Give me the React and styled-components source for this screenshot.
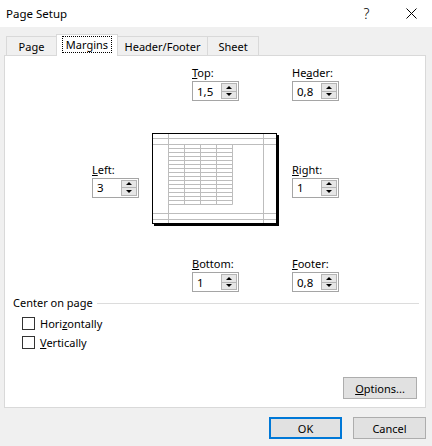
import React from "react";
import styled, { createGlobalStyle } from "styled-components";

const GlobalStyle = createGlobalStyle`
  html, body {
    margin: 0;
    padding: 0;
    background: #f0f0f0;
  }
  body {
    font-family: "Noto Sans", "Liberation Sans", sans-serif;
    font-size: 11px;
    color: #000;
  }
  * {
    box-sizing: border-box;
  }
`;

const App = () => {
  return (
    <>
      <GlobalStyle />
      <Window>
        <TitleBar>
          <Title>Page Setup</Title>
          <CaptionButtons>
            <HelpButton>?</HelpButton>
            <CloseButton>
              <svg width="11" height="11" viewBox="0 0 11 11">
                <path d="M0.5 0.5 L10.5 10.5 M10.5 0.5 L0.5 10.5" stroke="#000" strokeWidth="1" />
              </svg>
            </CloseButton>
          </CaptionButtons>
        </TitleBar>

        <TabRow>
          <Tab $w={51}>Page</Tab>
          <Tab $w={62} $active>
            <Focus>Margins</Focus>
          </Tab>
          <Tab $w={91}>Header/Footer</Tab>
          <Tab $w={52}>Sheet</Tab>
        </TabRow>

        <Panel>
          <MarginGrid>
            <Field $col="3" $row="1">
              <Label><u>T</u>op:</Label>
              <Spinner value="1,5" />
            </Field>
            <Field $col="5" $row="1">
              <Label>He<u>a</u>der:</Label>
              <Spinner value="0,8" />
            </Field>
            <Field $col="1" $row="2" $center>
              <Label><u>L</u>eft:</Label>
              <Spinner value="3" />
            </Field>
            <Preview>
              <PagePreview />
            </Preview>
            <Field $col="5" $row="2" $center>
              <Label><u>R</u>ight:</Label>
              <Spinner value="1" />
            </Field>
            <Field $col="3" $row="3">
              <Label><u>B</u>ottom:</Label>
              <Spinner value="1" />
            </Field>
            <Field $col="5" $row="3">
              <Label><u>F</u>ooter:</Label>
              <Spinner value="0,8" />
            </Field>
          </MarginGrid>

          <GroupHeader>
            <span>Center on page</span>
            <GroupLine />
          </GroupHeader>
          <CheckList>
            <CheckRow>
              <CheckBox />
              <span>Hori<u>z</u>ontally</span>
            </CheckRow>
            <CheckRow>
              <CheckBox />
              <span><u>V</u>ertically</span>
            </CheckRow>
          </CheckList>

          <OptionsButton>
            <u>O</u>ptions...
          </OptionsButton>
        </Panel>

        <ButtonRow>
          <DialogButton $default>OK</DialogButton>
          <DialogButton>Cancel</DialogButton>
        </ButtonRow>
      </Window>
    </>
  );
};

const Spinner = ({ value }) => (
  <SpinField>
    <SpinValue>{value}</SpinValue>
    <SpinButtons>
      <SpinHalf>
        <ArrowUp />
      </SpinHalf>
      <SpinHalf $bottom>
        <ArrowDown />
      </SpinHalf>
    </SpinButtons>
  </SpinField>
);

// page drawing: margins, header/footer lines and a small table
const PagePreview = () => {
  const rows = [];
  for (let i = 0; i <= 15; i++) {
    const y = 11.5 + i * 4;
    rows.push(<line key={"r" + i} x1="16.5" x2="80.5" y1={y} y2={y} />);
  }
  const cols = [16.5, 32.5, 48.5, 64.5, 80.5].map((x) => (
    <line key={"c" + x} x1={x} x2={x} y1="11.5" y2="71.5" />
  ));
  return (
    <svg width="128" height="94" viewBox="0 0 128 94">
      <rect x="2" y="2" width="125" height="91" fill="#000" />
      <rect x="0.5" y="0.5" width="124" height="90" fill="#fff" stroke="#000" />
      <g stroke="#bdbdbd" strokeWidth="1" fill="none">
        <line x1="16.5" x2="16.5" y1="1" y2="90" />
        <line x1="111.5" x2="111.5" y1="1" y2="90" />
        <line x1="1" x2="124" y1="5.5" y2="5.5" />
        <line x1="1" x2="124" y1="11.5" y2="11.5" />
        <line x1="1" x2="124" y1="80.5" y2="80.5" />
        <line x1="1" x2="124" y1="86.5" y2="86.5" />
        {rows}
        {cols}
      </g>
    </svg>
  );
};

export default App;

const Window = styled.div`
  width: 432px;
  height: 446px;
  display: flex;
  flex-direction: column;
  background: #f0f0f0;
  overflow: hidden;
`;

const TitleBar = styled.div`
  height: 27px;
  background: #fff;
  display: flex;
  align-items: center;
  padding-left: 6px;
`;

const Title = styled.div`
  font-size: 11.5px;
`;

const CaptionButtons = styled.div`
  margin-left: auto;
  display: flex;
  height: 100%;
`;

const HelpButton = styled.div`
  width: 47px;
  display: flex;
  align-items: center;
  justify-content: center;
  font-size: 14px;
  font-weight: 300;
`;

const CloseButton = styled.div`
  width: 42px;
  display: flex;
  align-items: center;
  justify-content: center;
`;

const TabRow = styled.div`
  height: 28px;
  display: flex;
  align-items: flex-end;
  padding-left: 6px;
`;

const Tab = styled.div`
  position: relative;
  width: ${(p) => p.$w}px;
  height: ${(p) => (p.$active ? 22 : 19)}px;
  margin-bottom: ${(p) => (p.$active ? -1 : 0)}px;
  margin-left: -1px;
  z-index: ${(p) => (p.$active ? 1 : 0)};
  display: flex;
  align-items: center;
  justify-content: center;
  background: ${(p) => (p.$active ? "#fff" : "#f0f0f0")};
  border: 1px solid #d9d9d9;
  border-bottom: none;
  padding-bottom: ${(p) => (p.$active ? 2 : 0)}px;
  &:first-child {
    margin-left: 0;
  }
`;

const Focus = styled.span`
  outline: 1px dotted #000;
  padding: 0 3px;
  line-height: 15px;
`;

const Panel = styled.div`
  height: 353px;
  margin: 0 6px 0 4px;
  background: #fff;
  border: 1px solid #d9d9d9;
  display: flex;
  flex-direction: column;
  padding-top: 10px;
`;

const MarginGrid = styled.div`
  display: grid;
  grid-template-columns: 60px 40px 88px 12px 48px;
  grid-template-rows: 35px 92px 35px;
  row-gap: 32px;
  margin-left: 87px;
`;

const Field = styled.div`
  grid-column: ${(p) => p.$col};
  grid-row: ${(p) => p.$row};
  align-self: ${(p) => (p.$center ? "center" : "start")};
  display: flex;
  flex-direction: column;
  gap: 1px;
  margin-top: ${(p) => (p.$center ? 2 : 0)}px;
`;

const Label = styled.div`
  line-height: 14px;
`;

const SpinField = styled.div`
  width: 47px;
  height: 20px;
  border: 1px solid #a5a5a5;
  display: flex;
  align-items: stretch;
  background: #fff;
`;

const SpinValue = styled.div`
  flex: 1;
  display: flex;
  align-items: center;
  padding-left: 4px;
  font-size: 11.5px;
`;

const SpinButtons = styled.div`
  width: 16px;
  margin: 1px 1px 1px 0;
  display: flex;
  flex-direction: column;
  border: 1px solid #b4b4b4;
`;

const SpinHalf = styled.div`
  flex: 1;
  background: #e6e6e6;
  display: flex;
  align-items: center;
  justify-content: center;
  border-top: ${(p) => (p.$bottom ? "1px solid #b4b4b4" : "none")};
`;

const ArrowUp = styled.div`
  width: 0;
  height: 0;
  border-left: 3px solid transparent;
  border-right: 3px solid transparent;
  border-bottom: 3px solid #000;
`;

const ArrowDown = styled.div`
  width: 0;
  height: 0;
  border-left: 3px solid transparent;
  border-right: 3px solid transparent;
  border-top: 3px solid #000;
`;

const Preview = styled.div`
  grid-column: 2 / span 2;
  grid-row: 2;
  display: flex;
`;

const GroupHeader = styled.div`
  display: flex;
  align-items: center;
  gap: 4px;
  margin: 4px 6px 0 8px;
  line-height: 14px;
`;

const GroupLine = styled.div`
  flex: 1;
  border-top: 1px solid #dcdcdc;
  margin-top: 1px;
`;

const CheckList = styled.div`
  display: flex;
  flex-direction: column;
  margin: 4px 0 0 17px;
`;

const CheckRow = styled.div`
  display: flex;
  align-items: center;
  gap: 5px;
  height: 19px;
`;

const CheckBox = styled.div`
  width: 13px;
  height: 13px;
  border: 1px solid #333;
  background: #fff;
`;

const OptionsButton = styled.div`
  margin-top: auto;
  margin-bottom: 8px;
  margin-right: 8px;
  align-self: flex-end;
  width: 74px;
  height: 22px;
  display: flex;
  align-items: center;
  justify-content: center;
  background: #e1e1e1;
  border: 1px solid #adadad;
`;

const ButtonRow = styled.div`
  display: flex;
  justify-content: flex-end;
  gap: 11px;
  padding-right: 6px;
  margin-top: 9px;
`;

const DialogButton = styled.div`
  width: 73px;
  height: 22px;
  display: flex;
  align-items: center;
  justify-content: center;
  background: #e1e1e1;
  border: ${(p) => (p.$default ? "2px solid #0078d7" : "1px solid #adadad")};
`;
